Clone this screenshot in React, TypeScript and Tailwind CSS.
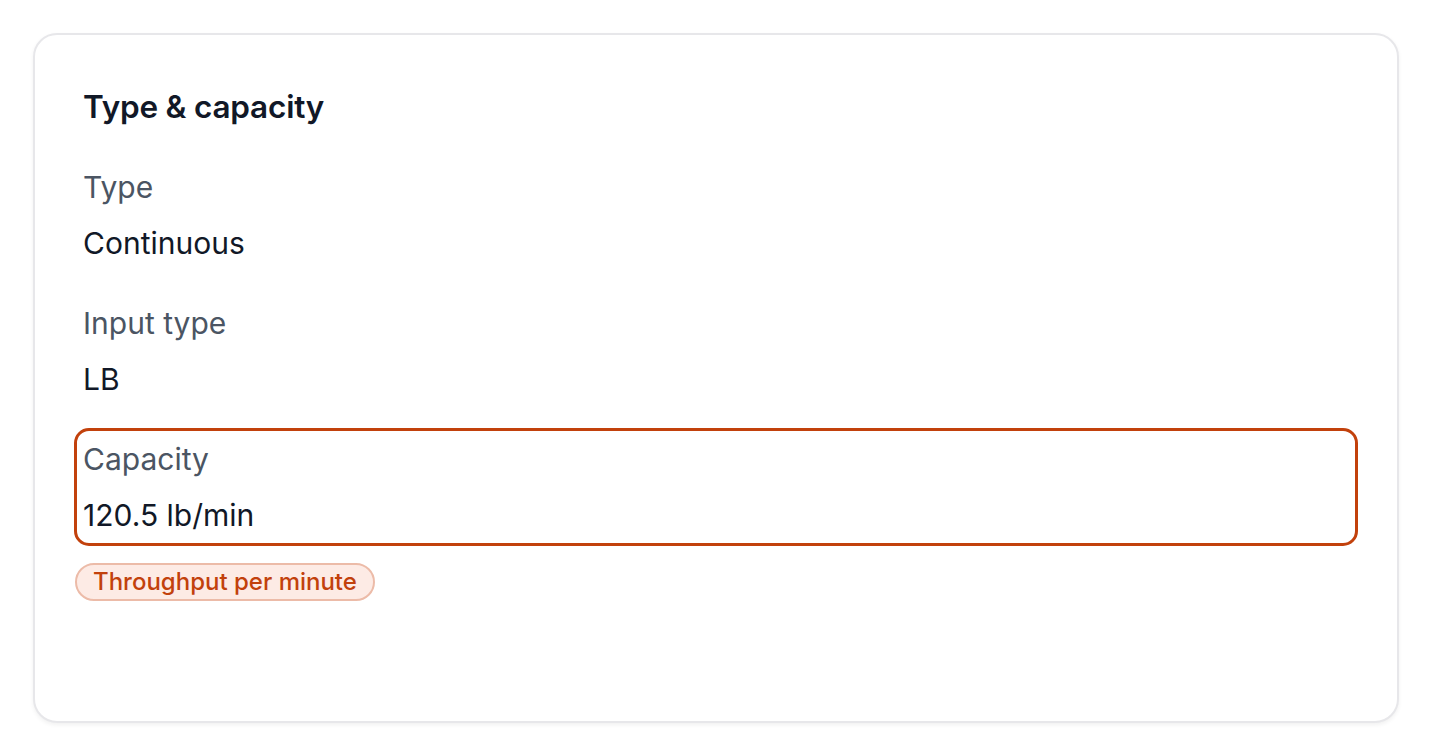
export default function App() {
  const font = { fontFamily: "Inter, 'Noto Sans', sans-serif" };
  return (
    <div className="min-h-screen bg-white p-[33px]" style={font}>
      <div className="h-[690px] rounded-[24px] border-2 border-[#e7e7ea] bg-white px-[48px] pt-[52px] shadow-[0_2px_4px_rgba(0,0,0,0.06)]">
        <h2 className="text-[31.5px] leading-[40px] font-semibold tracking-[-0.2px] text-[#111827]">Type &amp; capacity</h2>
        <div className="mt-[38px] flex flex-col gap-[36px]">
          <div className="flex flex-col gap-[12px]">
            <div className="text-[30px] leading-[44px] text-[#4b5563]">Type</div>
            <div className="text-[30px] leading-[44px] text-[#111827]">Continuous</div>
          </div>
          <div className="flex flex-col gap-[12px]">
            <div className="text-[30px] leading-[44px] text-[#4b5563]">Input type</div>
            <div className="text-[30px] leading-[44px] text-[#111827]">LB</div>
          </div>
          <div>
            <div className="flex flex-col gap-[12px] rounded-[6px] outline-[3px] outline-solid outline-offset-[6px] outline-[#c2410c]">
              <div className="text-[30px] leading-[44px] text-[#4b5563]">Capacity</div>
              <div className="text-[30px] leading-[44px] text-[#111827]">120.5 lb/min</div>
            </div>
            <div className="-ml-[8px] mt-[26px] flex">
              <span className="rounded-full border-2 border-[#ecbba8] bg-[#fdebe5] px-[16px] text-[24px] leading-[34px] font-medium text-[#c2410c]">
                Throughput per minute
              </span>
            </div>
          </div>
        </div>
      </div>
    </div>
  );
}
